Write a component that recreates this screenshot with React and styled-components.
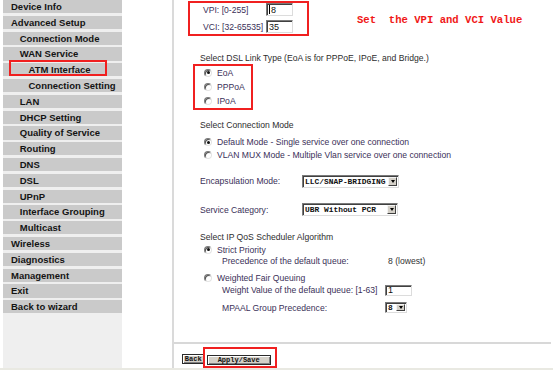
import React from 'react'
import styled, { createGlobalStyle } from 'styled-components'

const GlobalStyle = createGlobalStyle`
    html, body {
        margin: 0;
        background: #ffffff;
        overflow: hidden;
    }
    #root {
        height: 371px;
    }
`

const menu = [
    { label: 'Device Info', level: 0 },
    { label: 'Advanced Setup', level: 0 },
    { label: 'Connection Mode', level: 1 },
    { label: 'WAN Service', level: 1 },
    { label: 'ATM Interface', level: 2, marked: true },
    { label: 'Connection Setting', level: 2 },
    { label: 'LAN', level: 1 },
    { label: 'DHCP Setting', level: 1 },
    { label: 'Quality of Service', level: 1 },
    { label: 'Routing', level: 1 },
    { label: 'DNS', level: 1 },
    { label: 'DSL', level: 1 },
    { label: 'UPnP', level: 1 },
    { label: 'Interface Grouping', level: 1 },
    { label: 'Multicast', level: 1 },
    { label: 'Wireless', level: 0 },
    { label: 'Diagnostics', level: 0 },
    { label: 'Management', level: 0 },
    { label: 'Exit', level: 0 },
    { label: 'Back to wizard', level: 0 },
]

function Radio({ checked, children, ...rest }) {
    return (
        <RadioRow {...rest}>
            <RadioDot $checked={checked} />
            <LabelText>{children}</LabelText>
        </RadioRow>
    )
}

function Select({ value, width, height }) {
    return (
        <SelectBox $w={width} $h={height}>
            <span>{value}</span>
            <Arrow />
        </SelectBox>
    )
}

function App() {
    return (
        <>
            <GlobalStyle />
            <Page>
                <Sidebar>
                    {menu.map(item => (
                        <NavItem key={item.label} $level={item.level} $marked={item.marked}>
                            {item.label}
                        </NavItem>
                    ))}
                </Sidebar>

                <Content>
                    <TopRow>
                        <VpiBox>
                            <LabelText>VPI: [0-255]</LabelText>
                            <TextInput $w={27} $h={13}><Caret />8</TextInput>
                            <LabelText>VCI: [32-65535]</LabelText>
                            <TextInput $w={27} $h={13}>35</TextInput>
                        </VpiBox>
                        <Note>Set  the VPI and VCI Value</Note>
                    </TopRow>

                    <Heading $top={15.5}>Select DSL Link Type (EoA is for PPPoE, IPoE, and Bridge.)</Heading>
                    <LinkTypeBox>
                        <Radio checked $h={14.2} $indent={9}>EoA</Radio>
                        <Radio $h={14.2} $indent={9}>PPPoA</Radio>
                        <Radio $h={14.2} $indent={9}>IPoA</Radio>
                    </LinkTypeBox>

                    <Heading $top={10.4}>Select Connection Mode</Heading>
                    <Radio checked $h={12.5} $top={4.5} $indent={30}>Default Mode - Single service over one connection</Radio>
                    <Radio $h={12.5} $indent={30}>VLAN MUX Mode - Multiple Vlan service over one connection</Radio>

                    <FieldRow $top={14} $h={13}>
                        <FieldLabel>Encapsulation Mode:</FieldLabel>
                        <Select value="LLC/SNAP-BRIDGING" width={97} height={13} />
                    </FieldRow>
                    <FieldRow $top={15.5} $h={13}>
                        <FieldLabel>Service Category:</FieldLabel>
                        <Select value="UBR Without PCR" width={96} height={13} />
                    </FieldRow>

                    <Heading $top={16}>Select IP QoS Scheduler Algorithm</Heading>
                    <Radio checked $h={11} $top={1} $indent={30}>Strict Priority</Radio>
                    <SubRow $h={11}>
                        <SubLabel>Precedence of the default queue:</SubLabel>
                        <Value>8 (lowest)</Value>
                    </SubRow>
                    <Radio $h={11} $top={5.7} $indent={30}>Weighted Fair Queuing</Radio>
                    <SubRow $h={12} $top={1.3}>
                        <SubLabel>Weight Value of the default queue: [1-63]</SubLabel>
                        <TextInput $w={27} $h={11}>1</TextInput>
                    </SubRow>
                    <SubRow $h={11} $top={6}>
                        <SubLabel>MPAAL Group Precedence:</SubLabel>
                        <Select value="8" width={22} height={11} />
                    </SubRow>

                    <Footer>
                        <Rule />
                        <ButtonRow>
                            <Button $w={23} style={{ marginTop: 7 }}>Back</Button>
                            <Marked>
                                <Button $w={64}>Apply/Save</Button>
                            </Marked>
                        </ButtonRow>
                    </Footer>
                </Content>
            </Page>
        </>
    )
}

export default App

const Page = styled.div`
    display: flex;
    height: 368px;
    border-bottom: 2px solid #e9e9e2;
`

const Sidebar = styled.nav`
    width: 119px;
    margin-left: 3px;
    margin-right: 50px;
    background: #efefef;
`

const NavItem = styled.div`
    position: relative;
    height: 13.3px;
    margin-bottom: 2.5px;
    padding-left: ${p => 8 + p.$level * 8.75}px;
    background: #cacaca;
    color: #141414;
    font: bold 9.5px/13.3px "Liberation Sans", Arial, sans-serif;
    white-space: nowrap;

    ${p => p.$marked && `
        &::after {
            content: '';
            position: absolute;
            left: 6px;
            top: -3px;
            width: 98px;
            height: 16px;
            box-sizing: border-box;
            border: 2px solid #f02020;
        }
    `}
`

const Content = styled.main`
    flex: 1;
    display: flex;
    flex-direction: column;
    border-left: 2px solid #dadada;
    font-family: "Liberation Sans", Arial, sans-serif;
    font-size: 8.6px;
    color: #333;
`

const TopRow = styled.div`
    display: flex;
    align-items: flex-start;
    height: 37px;
    padding-left: 14px;
`

const VpiBox = styled.div`
    display: grid;
    grid-template-columns: 63px 27px;
    grid-template-rows: 13px 13px;
    row-gap: 4px;
    align-items: center;
    width: 121px;
    margin-top: 1px;
    padding: 0 0 1px 13px;
    box-sizing: border-box;
    border: 2px solid #f02020;
`

const Note = styled.div`
    margin: 13.5px 0 0 48px;
    color: #f01818;
    font: bold 10.6px/13px "Liberation Mono", "Courier New", monospace;
    white-space: pre;
`

const LabelText = styled.span`
    color: #3a3058;
    white-space: nowrap;
`

const TextInput = styled.div`
    display: flex;
    align-items: center;
    width: ${p => p.$w}px;
    height: ${p => p.$h}px;
    padding-left: 2px;
    box-sizing: border-box;
    background: #fff;
    border: 1px solid;
    border-color: #7b7b7b #dcdcdc #dcdcdc #7b7b7b;
    box-shadow: inset 1px 1px 0 #404040;
    color: #111;
    font-size: 9px;
`

const Caret = styled.span`
    width: 1px;
    height: 9px;
    margin-right: 1px;
    background: #000;
`

const Heading = styled.div`
    height: 11px;
    margin: ${p => p.$top || 0}px 0 0 26px;
    line-height: 11px;
    color: #2d2d2d;
    white-space: nowrap;
`

const LinkTypeBox = styled.div`
    width: 60px;
    margin-left: 19px;
    box-sizing: border-box;
    border: 2px solid #f02020;
`

const RadioRow = styled.div`
    display: flex;
    align-items: center;
    gap: 5px;
    height: ${p => p.$h}px;
    margin-top: ${p => p.$top || 0}px;
    padding-left: ${p => p.$indent || 0}px;
`

const RadioDot = styled.span`
    position: relative;
    flex: none;
    width: 8px;
    height: 8px;
    box-sizing: border-box;
    border-radius: 50%;
    border: 1px solid;
    border-color: #7a7a7a #e4e4e4 #e4e4e4 #7a7a7a;
    background: #fff;
    box-shadow: inset 1px 1px 0 #505050;

    ${p => p.$checked && `
        &::after {
            content: '';
            position: absolute;
            left: 1.5px;
            top: 1.5px;
            width: 3px;
            height: 3px;
            border-radius: 50%;
            background: #111;
        }
    `}
`

const FieldRow = styled.div`
    display: flex;
    align-items: center;
    height: ${p => p.$h}px;
    margin: ${p => p.$top || 0}px 0 0 26px;
`

const FieldLabel = styled(LabelText)`
    width: 102px;
    flex: none;
`

const SubRow = styled.div`
    display: flex;
    align-items: center;
    height: ${p => p.$h}px;
    margin: ${p => p.$top || 0}px 0 0 48px;
`

const SubLabel = styled(LabelText)`
    width: 163px;
    flex: none;
`

const Value = styled.span`
    padding-left: 3px;
    color: #333;
`

const SelectBox = styled.div`
    display: flex;
    align-items: center;
    width: ${p => p.$w}px;
    height: ${p => p.$h}px;
    padding: 0 1px 0 2px;
    box-sizing: border-box;
    background: #fff;
    border: 1px solid;
    border-color: #7b7b7b #dcdcdc #dcdcdc #7b7b7b;
    box-shadow: inset 1px 1px 0 #404040;
    color: #111;
    font: bold 7.9px "Liberation Mono", "Courier New", monospace;
    white-space: pre;
`

const Arrow = styled.span`
    display: flex;
    align-items: center;
    justify-content: center;
    width: 9px;
    height: calc(100% - 2px);
    margin-left: auto;
    box-sizing: border-box;
    background: #d4d0c8;
    border: 1px solid;
    border-color: #f4f4f4 #404040 #404040 #f4f4f4;

    &::before {
        content: '';
        border-top: 3px solid #000;
        border-left: 2.5px solid transparent;
        border-right: 2.5px solid transparent;
    }
`

const Footer = styled.footer`
    margin-top: auto;
    height: 26px;
`

const Rule = styled.div`
    height: 1.5px;
    margin-right: 2px;
    background: #d8d8d8;
`

const ButtonRow = styled.div`
    display: flex;
    align-items: flex-start;
    padding: 3.5px 0 0 7.7px;
`

const Button = styled.button`
    width: ${p => p.$w}px;
    height: 10px;
    padding: 0;
    box-sizing: border-box;
    background: #d4d0c8;
    border: 1px solid #2a2a2a;
    box-shadow: inset 1px 1px 0 #ffffff, inset -1px -1px 0 #808080;
    color: #111;
    font: bold 7px/8px "Liberation Mono", "Courier New", monospace;
`

const Marked = styled.div`
    margin-left: -1.7px;
    padding: 5px 4px 1px 1.7px;
    border: 2px solid #f02020;
`
